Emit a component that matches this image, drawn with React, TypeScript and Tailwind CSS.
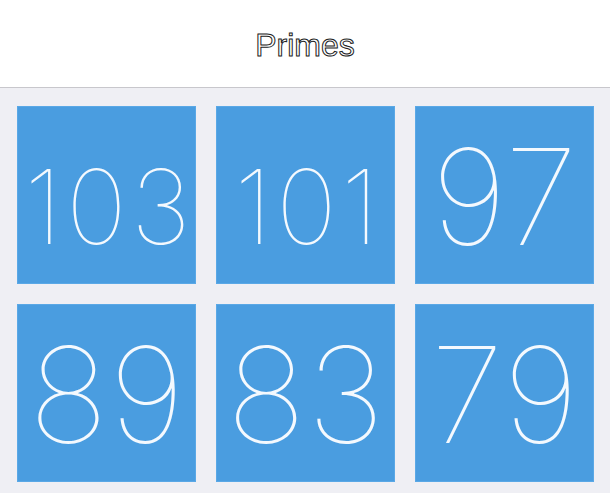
const PRIMES = [103, 101, 97, 89, 83, 79];

function Tile({ n }: { n: number }) {
  const big = n < 100;
  return (
    <div className="h-[178px] bg-[#4a9de0] border border-[#5aa8e6] flex items-end justify-center overflow-hidden">
      <span
        className={
          big
            ? "font-['Inter',sans-serif] font-thin text-[#f4f9fe] text-[133px] leading-none tracking-[1px] pb-[20px] pl-[1px]"
            : "font-['Inter',sans-serif] font-thin text-[#f4f9fe] text-[103px] leading-none tracking-[4px] pb-[25px] pl-[6px]"
        }
      >
        {n}
      </span>
    </div>
  );
}

export default function App() {
  return (
    <div className="w-[610px] h-[493px] bg-[#efeff4] overflow-hidden">
      <header className="h-[88px] bg-white border-b border-[#c8c7cc] flex items-center justify-center">
        <h1 className="font-['Liberation_Sans',Arial,sans-serif] text-[32px] text-white [-webkit-text-stroke:1px_#222] pt-[2px]">
          Primes
        </h1>
      </header>
      <main className="grid grid-cols-3 gap-x-[20px] gap-y-[20px] pl-[17px] pr-[16px] pt-[18px]">
        {PRIMES.map((n) => (
          <Tile key={n} n={n} />
        ))}
      </main>
    </div>
  );
}
